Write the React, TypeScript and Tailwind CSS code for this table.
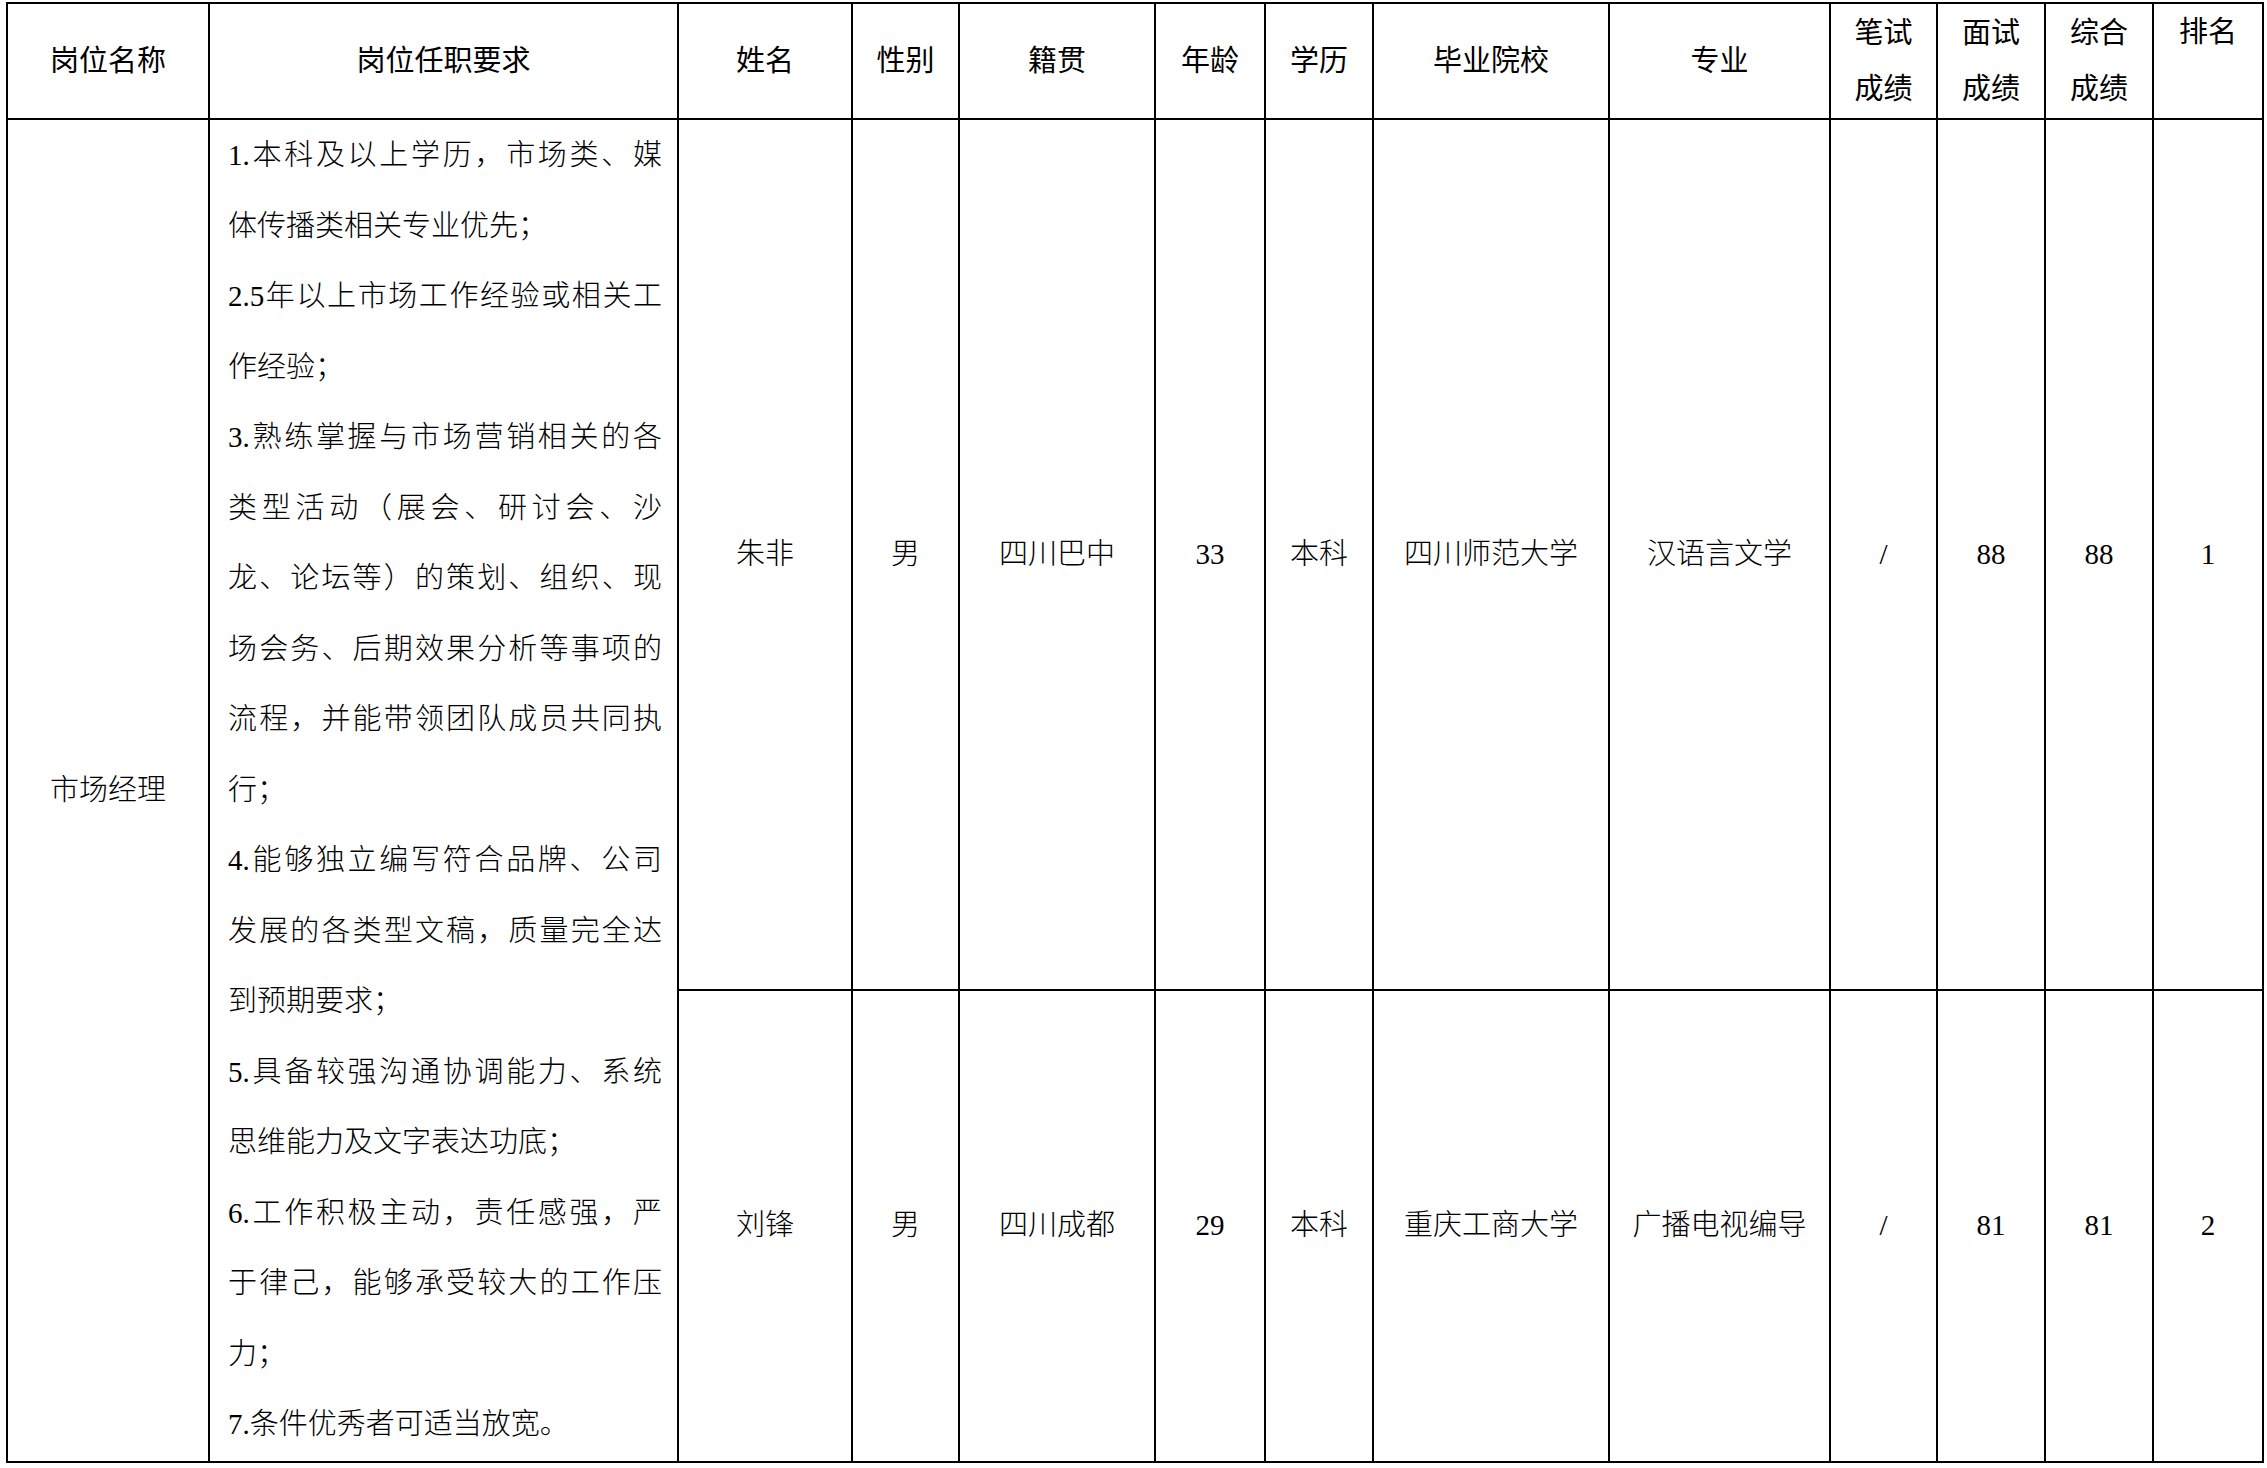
import React from "react";

const font = {
  fontFamily: '"Liberation Serif", "Noto Sans CJK SC", serif',
};

type Line = { t: string; j: boolean };

const lines: Line[] = [
  { t: "1.本科及以上学历，市场类、媒", j: true },
  { t: "体传播类相关专业优先；", j: false },
  { t: "2.5年以上市场工作经验或相关工", j: true },
  { t: "作经验；", j: false },
  { t: "3.熟练掌握与市场营销相关的各", j: true },
  { t: "类型活动（展会、研讨会、沙", j: true },
  { t: "龙、论坛等）的策划、组织、现", j: true },
  { t: "场会务、后期效果分析等事项的", j: true },
  { t: "流程，并能带领团队成员共同执", j: true },
  { t: "行；", j: false },
  { t: "4.能够独立编写符合品牌、公司", j: true },
  { t: "发展的各类型文稿，质量完全达", j: true },
  { t: "到预期要求；", j: false },
  { t: "5.具备较强沟通协调能力、系统", j: true },
  { t: "思维能力及文字表达功底；", j: false },
  { t: "6.工作积极主动，责任感强，严", j: true },
  { t: "于律己，能够承受较大的工作压", j: true },
  { t: "力；", j: false },
  { t: "7.条件优秀者可适当放宽。", j: false },
];

function H({ children }: { children: React.ReactNode }) {
  return (
    <div className="bg-white flex items-center justify-center text-center font-normal leading-[56.5px]">
      {children}
    </div>
  );
}

function H2({ a, b }: { a: string; b: string }) {
  return (
    <div className="bg-white flex flex-col items-center justify-center text-center font-normal leading-[56.5px]">
      <div>{a}</div>
      <div>{b}</div>
    </div>
  );
}

function D({ children }: { children: React.ReactNode }) {
  return (
    <div className="bg-white flex items-center justify-center text-center font-light whitespace-nowrap">
      {children}
    </div>
  );
}

export default function App() {
  const row1 = ["朱非", "男", "四川巴中", "33", "本科", "四川师范大学", "汉语言文学", "/", "88", "88", "1"];
  const row2 = ["刘锋", "男", "四川成都", "29", "本科", "重庆工商大学", "广播电视编导", "/", "81", "81", "2"];
  return (
    <div className="w-[2267px] min-h-[1468px] bg-white text-black pt-[2px] pl-[6px]" style={font}>
      <div className="grid w-fit gap-[2px] p-[2px] bg-black text-[29px] grid-cols-[200px_467px_172px_105px_194px_108px_106px_234px_219px_105px_106px_106px_108px] grid-rows-[114px_869px_470px]">
        <H>岗位名称</H>
        <H>岗位任职要求</H>
        <H>姓名</H>
        <H>性别</H>
        <H>籍贯</H>
        <H>年龄</H>
        <H>学历</H>
        <H>毕业院校</H>
        <H>专业</H>
        <H2 a="笔试" b="成绩" />
        <H2 a="面试" b="成绩" />
        <H2 a="综合" b="成绩" />
        <div className="bg-white flex flex-col items-center justify-start text-center font-normal leading-[56.5px]">
          <div>排名</div>
        </div>

        <div className="row-span-2 bg-white flex items-center justify-center font-light">市场经理</div>
        <div className="row-span-2 bg-white pl-[18px] pr-[15px] leading-[70.5px] font-light">
          {lines.map((l, i) => (
            <div
              key={i}
              className={l.j ? "whitespace-nowrap text-justify [text-align-last:justify]" : "whitespace-nowrap text-left"}
            >
              {l.t}
            </div>
          ))}
        </div>
        {row1.map((v, i) => (
          <D key={"a" + i}>{v}</D>
        ))}
        {row2.map((v, i) => (
          <D key={"b" + i}>{v}</D>
        ))}
      </div>
    </div>
  );
}
